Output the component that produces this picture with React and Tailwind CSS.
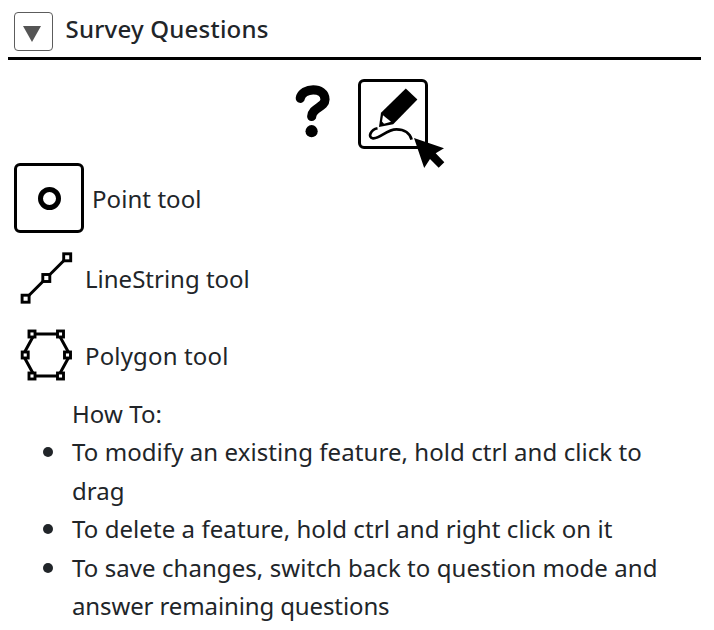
import React from 'react';

function QuestionIcon() {
  return (
    <svg width="36" height="54" viewBox="294 84 36 54" fill="none">
      <path
        d="M300.3 98.3C302 87.3 325 86.3 325 99.5C325 107 312 108 311.7 116.5"
        stroke="#000"
        strokeWidth="9.2"
        strokeLinecap="round"
      />
      <circle cx="311.6" cy="131.2" r="6.1" fill="#000" />
    </svg>
  );
}

function DrawIcon() {
  return (
    <svg width="64" height="64" viewBox="361 82 64 64" fill="none">
      <path d="M405.8 88.5L417.4 99.5L393.2 124.2L379 127L381 112.8Z" fill="#000" />
      <path d="M383 115.3L391 121.8L384 123.8L382 121.5Z" fill="#fff" />
      <path
        d="M377.5 128.2C371 129.5 367 137.3 373 138.3C380.5 139 386 129.5 396.5 129.4C404.5 129.4 410 133.5 411.6 139.7"
        stroke="#000"
        strokeWidth="2.7"
      />
    </svg>
  );
}

function PointerIcon() {
  return (
    <svg className="absolute top-[52px] left-[50px]" width="36" height="36" viewBox="411 134 36 36">
      <path d="M414 138L444 148.3L435.7 153.3L444.3 162.2L438.7 167.8L430 159L424.2 168Z" fill="#000" />
    </svg>
  );
}

function Nodes({ points, size }) {
  return points.map(([x, y]) => (
    <rect
      key={`${x}-${y}`}
      x={x - size / 2}
      y={y - size / 2}
      width={size}
      height={size}
      fill="#fff"
      stroke="#000"
      strokeWidth="2.9"
    />
  ));
}

function LineIcon() {
  return (
    <svg width="56" height="56" viewBox="18 250 56 56" fill="none">
      <path d="M25.6 298.7L67.2 257.3" stroke="#000" strokeWidth="3" />
      <Nodes size={7} points={[[25.6, 298.7], [46.3, 278], [67.2, 257.3]]} />
    </svg>
  );
}

function PolygonIcon() {
  return (
    <svg width="56" height="56" viewBox="18 327 56 56" fill="none">
      <path d="M34.5 334H58.5L70 355L58.5 376H34.5L23 355Z" stroke="#000" strokeWidth="3" />
      <Nodes
        size={6}
        points={[[32, 334], [60.5, 334], [67.5, 355], [60.5, 376], [32, 376], [25.2, 355]]}
      />
    </svg>
  );
}

function Bullet() {
  return <span className="mt-[14px] mr-[19px] size-[10px] shrink-0 rounded-full bg-[#212529]" />;
}

export default function App() {
  return (
    <div className="h-[630px] w-[714px] overflow-hidden bg-white pt-3 pl-2 font-['Noto_Sans','Open_Sans',sans-serif] text-[24px] leading-[38.4px] font-normal tracking-[0.07px] text-[#212529]">
      <header className="flex h-12 w-[693px] border-b-[3px] border-black pl-1.5">
        <button className="flex size-[38.5px] items-center justify-center rounded-[4px] border-[1.5px] border-[#5c5c5c]">
          <svg className="mt-[5px] -ml-[3px]" width="18" height="16" viewBox="0 0 18 16">
            <path d="M0 0H18L9 16Z" fill="#555" />
          </svg>
        </button>
        <h1 className="-mt-[2px] ml-[13px] text-[24px] font-medium tracking-[0.22px] whitespace-nowrap">Survey Questions</h1>
      </header>

      <div className="mt-[19px] flex h-[71px] pl-[286px]">
        <button className="mt-[5px] h-[54px]">
          <QuestionIcon />
        </button>
        <button className="relative ml-7 flex size-[70px] items-center justify-center rounded-[6px] border-[3px] border-black">
          <DrawIcon />
          <PointerIcon />
        </button>
      </div>

      <div className="mt-[13px] flex h-[70px] items-center pl-1.5">
        <button className="flex size-[70px] items-center justify-center rounded-[6px] border-[3px] border-black">
          <span className="size-[23px] rounded-full border-[5px] border-black" />
        </button>
        <span className="mt-0.5 ml-2">Point tool</span>
      </div>
      <div className="mt-[17px] flex h-14 items-center pl-2.5">
        <LineIcon />
        <span className="mt-0.5 ml-[11px] tracking-[0px]">LineString tool</span>
      </div>
      <div className="mt-[21px] flex h-14 items-center pl-2.5">
        <PolygonIcon />
        <span className="mt-0.5 ml-[11px] tracking-[0.15px]">Polygon tool</span>
      </div>

      <ul className="mt-3 pl-[35px] whitespace-nowrap">
        <li className="pl-[29px]">How To:</li>
        <li className="flex">
          <Bullet />
          <p>To modify an existing feature, hold ctrl and click to<br />drag</p>
        </li>
        <li className="flex">
          <Bullet />
          <p>To delete a feature, hold ctrl and right click on it</p>
        </li>
        <li className="flex">
          <Bullet />
          <p>To save changes, switch back to question mode and<br /><span className="tracking-[-0.12px]">answer remaining questions</span></p>
        </li>
      </ul>
    </div>
  );
}
